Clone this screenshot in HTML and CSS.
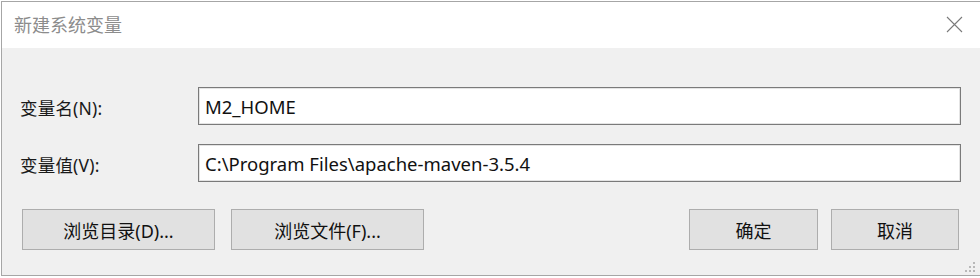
FILE: index.html
```html
<!DOCTYPE html>
<html lang="zh-CN">
<head>
    <meta charset="UTF-8">
    <title>新建系统变量</title>
    <link rel="stylesheet" href="styles.css">
</head>
<body>
    <div class="dialog">
        <div class="titlebar">
            <span class="title">新建系统变量</span>
            <svg class="close" width="17" height="17" viewBox="0 0 17 17">
                <path d="M1 1 L16 16 M16 1 L1 16" stroke="#7a7a7a" stroke-width="1.1" fill="none"/>
            </svg>
        </div>
        <div class="content">
            <div class="fields">
                <label class="label" for="varName">变量名(N):</label>
                <input class="field" id="varName" type="text" value="M2_HOME">
                <label class="label" for="varValue">变量值(V):</label>
                <input class="field" id="varValue" type="text" value="C:\Program Files\apache-maven-3.5.4">
            </div>
            <div class="buttons">
                <div class="group">
                    <button class="btn wide">浏览目录(D)...</button>
                    <button class="btn wide">浏览文件(F)...</button>
                </div>
                <div class="group tight">
                    <button class="btn ok">确定</button>
                    <button class="btn cancel">取消</button>
                </div>
            </div>
            <svg class="grip" width="12" height="12" viewBox="0 0 12 12">
                <rect x="9" y="1" width="2" height="2" fill="#b8b8b8"/>
                <rect x="5" y="5" width="2" height="2" fill="#b8b8b8"/>
                <rect x="9" y="5" width="2" height="2" fill="#b8b8b8"/>
                <rect x="1" y="9" width="2" height="2" fill="#b8b8b8"/>
                <rect x="5" y="9" width="2" height="2" fill="#b8b8b8"/>
                <rect x="9" y="9" width="2" height="2" fill="#b8b8b8"/>
            </svg>
        </div>
    </div>
</body>
</html>
```

FILE: styles.css
```css
html, body { margin: 0; padding: 0; }
body { background: #fff; width: 980px; height: 278px; overflow: hidden; font-family: "Noto Sans", "Noto Sans CJK SC", sans-serif; }

.dialog { margin: 1px 0 0 1px; height: 273px; border: 1px solid #a6a6a6; border-right: none; display: flex; flex-direction: column; }

.titlebar { height: 46px; background: #fff; display: flex; align-items: center; justify-content: space-between; padding: 0 17px 0 12px; }
.title { font-size: 18px; color: #8c8c8c; margin-top: -3px; }
.close { margin-top: -1px; }

.content { flex: 1; background: #f0f0f0; position: relative; padding: 39px 0 0 18px; }

.fields { display: grid; grid-template-columns: 178px 763px; row-gap: 19px; align-items: center; }
.label { font-size: 17.5px; color: #1a1a1a; padding-top: 2px; letter-spacing: 0.2px; }
.field { box-sizing: border-box; height: 38px; border: 1px solid #7a7a7a; box-shadow: inset 0 0 0 1px #e4e4e4; background: #fff; padding: 0 6px; font-family: inherit; font-size: 18.5px; color: #111; outline: none; }

.buttons { display: flex; justify-content: space-between; margin-top: 27px; padding-left: 2px; width: 937px; }
.group { display: flex; gap: 16px; }
.group.tight { gap: 13px; }
.btn { box-sizing: border-box; height: 41px; background: #e1e1e1; border: 1px solid #adadad; font-family: inherit; font-size: 18px; color: #111; padding: 0; }
.btn.wide { width: 193px; }
.btn.ok { width: 129px; }
.btn.cancel { width: 128px; }

.grip { position: absolute; right: 4px; bottom: 2px; }
```
